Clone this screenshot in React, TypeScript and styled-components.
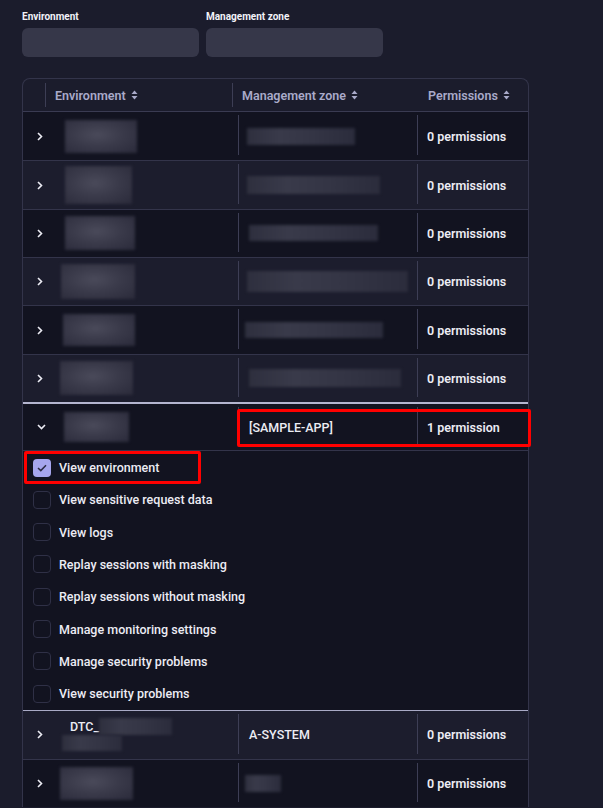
import React from "react";
import styled, { createGlobalStyle } from "styled-components";

const Global = createGlobalStyle`
  html, body { margin: 0; padding: 0; background: #1b1c2c; }
  body { font-family: Roboto, "Noto Sans", sans-serif; color: #ececf4; overflow: hidden; }
  * { box-sizing: border-box; }
`;

const Page = styled.div`
  width: 603px;
  height: 808px;
  padding: 0 22px;
  background: #1b1c2c;
  overflow: hidden;
`;

const Filters = styled.div`
  display: flex;
  gap: 7px;
  padding-top: 11px;
`;

const Field = styled.div`
  display: flex;
  flex-direction: column;
  gap: 5px;
`;

const FieldLabel = styled.div`
  font-size: 10px;
  font-weight: 700;
  color: #f2f2f8;
  height: 12px;
  line-height: 12px;
`;

const Input = styled.div`
  width: 177px;
  height: 29px;
  border-radius: 6px;
  background: #363749;
`;

const Table = styled.div`
  margin-top: 21px;
  width: 507px;
  border: 1px solid #33344a;
  border-bottom: none;
  border-radius: 8px 8px 0 0;
`;

const HeaderRow = styled.div`
  display: grid;
  grid-template-columns: 22px 187px 186px 1fr;
  height: 33px;
  border-bottom: 1px solid #3a3b52;
  align-items: center;
`;

const HeaderCell = styled.div<{ $divider?: boolean }>`
  position: relative;
  height: 100%;
  display: flex;
  align-items: center;
  gap: 5px;
  padding-left: 10px;
  font-size: 12.5px;
  font-weight: 600;
  color: #a9aac9;
  white-space: nowrap;
  &::before {
    content: "";
    display: ${(p) => (p.$divider ? "block" : "none")};
    position: absolute;
    left: 0;
    top: 4px;
    bottom: 4px;
    width: 1px;
    background: #3d3e55;
  }
`;

const Row = styled.div<{ $dark: boolean; $strongTop?: boolean; $noTop?: boolean }>`
  position: relative;
  display: grid;
  grid-template-columns: 34px 181px 179px 1fr;
  height: 48.35px;
  background: ${(p) => (p.$dark ? "#121320" : "#1c1d2d")};
  border-top: ${(p) =>
    p.$noTop ? "none" : p.$strongTop ? "2px solid #b4b5cf" : "1px solid #33344a"};
`;

const Cell = styled.div<{ $divider?: boolean }>`
  position: relative;
  display: flex;
  align-items: center;
  font-size: 12.5px;
  font-weight: 600;
  color: #ececf4;
  white-space: nowrap;
  &::before {
    content: "";
    display: ${(p) => (p.$divider ? "block" : "none")};
    position: absolute;
    left: 0;
    top: 3px;
    bottom: 5px;
    width: 1px;
    background: #3d3e55;
  }
`;

const ChevronCell = styled(Cell)`
  justify-content: flex-start;
  padding-left: 14px;
`;

const TextCell = styled(Cell)`
  padding-left: 10px;
`;

const ZoneCell = styled(Cell)`
  padding-left: 11px;
  font-weight: 500;
`;

const Blur = styled.div<{ $w: number; $h: number; $x: number }>`
  width: ${(p) => p.$w}px;
  height: ${(p) => p.$h}px;
  margin-left: ${(p) => p.$x}px;
  background: radial-gradient(ellipse at 45% 45%, #4a4a5a 0%, #3a3a4a 45%, #2a2a3a 100%);
  filter: blur(1.5px);
  flex-shrink: 0;
`;

const BarBlur = styled(Blur)`
  background: linear-gradient(90deg, #2e2f3e 0%, #393a4a 30%, #343545 60%, #2b2c3c 100%);
`;

const EnvStack = styled.div`
  display: flex;
  flex-direction: column;
  margin-left: 5px;
`;

const DtcLine = styled.div`
  display: flex;
  align-items: center;
  font-size: 12.5px;
  font-weight: 500;
`;

const DtcText = styled.span`
  margin-left: 8px;
`;

const PermList = styled.div`
  background: #121320;
  border-top: 1px solid #33344a;
  border-bottom: 1px solid #a9aac6;
  display: flex;
  flex-direction: column;
`;

const PermItem = styled.div`
  position: relative;
  height: 32.3px;
  display: flex;
  align-items: center;
  gap: 8px;
  padding-left: 10px;
  font-size: 12.5px;
  font-weight: 500;
  color: #ececf4;
`;

const Box = styled.div<{ $checked: boolean }>`
  width: 18px;
  height: 18px;
  border-radius: 4px;
  display: flex;
  align-items: center;
  justify-content: center;
  background: ${(p) => (p.$checked ? "#a6a6ee" : "transparent")};
  border: ${(p) => (p.$checked ? "none" : "1px solid #2f3046")};
`;

const Highlight = styled.div<{ $l: number; $t: number; $w: number; $h: number }>`
  position: absolute;
  left: ${(p) => p.$l}px;
  top: ${(p) => p.$t}px;
  width: ${(p) => p.$w}px;
  height: ${(p) => p.$h}px;
  border: 3px solid #ff0000;
  border-radius: 2px;
  pointer-events: none;
  z-index: 2;
`;

const SortIcon = () => (
  <svg width="7" height="10" viewBox="0 0 7 10">
    <path d="M3.5 0.5 L6.5 4 L0.5 4 Z" fill="#a9aac9" />
    <path d="M3.5 9.5 L6.5 6 L0.5 6 Z" fill="#a9aac9" />
  </svg>
);

const Chevron = ({ open }: { open?: boolean }) =>
  open ? (
    <svg width="9" height="6" viewBox="0 0 9 6">
      <path d="M1 1 L4.5 4.5 L8 1" stroke="#ececf4" strokeWidth="1.6" fill="none" />
    </svg>
  ) : (
    <svg width="6" height="9" viewBox="0 0 6 9">
      <path d="M1 1 L4.5 4.5 L1 8" stroke="#ececf4" strokeWidth="1.6" fill="none" />
    </svg>
  );

const Check = () => (
  <svg width="10" height="8" viewBox="0 0 10 8">
    <path d="M1 4 L3.8 6.6 L9 1.2" stroke="#2b2b45" strokeWidth="1.5" fill="none" />
  </svg>
);

type R = {
  env: { x: number; w: number; h: number };
  zone: { x: number; w: number; h: number };
};

const rows: R[] = [
  { env: { x: 8, w: 72, h: 33 }, zone: { x: 9, w: 108, h: 17 } },
  { env: { x: 8, w: 67, h: 38 }, zone: { x: 9, w: 133, h: 18 } },
  { env: { x: 8, w: 70, h: 34 }, zone: { x: 11, w: 129, h: 16 } },
  { env: { x: 4, w: 74, h: 35 }, zone: { x: 9, w: 161, h: 21 } },
  { env: { x: 6, w: 72, h: 32 }, zone: { x: 7, w: 138, h: 16 } },
  { env: { x: 3, w: 73, h: 34 }, zone: { x: 11, w: 152, h: 18 } },
];

const perms = [
  "View environment",
  "View sensitive request data",
  "View logs",
  "Replay sessions with masking",
  "Replay sessions without masking",
  "Manage monitoring settings",
  "Manage security problems",
  "View security problems",
];

export default function App() {
  return (
    <Page>
      <Global />
      <Filters>
        <Field>
          <FieldLabel>Environment</FieldLabel>
          <Input />
        </Field>
        <Field>
          <FieldLabel>Management zone</FieldLabel>
          <Input />
        </Field>
      </Filters>
      <Table>
        <HeaderRow>
          <HeaderCell />
          <HeaderCell $divider>
            Environment <SortIcon />
          </HeaderCell>
          <HeaderCell $divider>
            Management zone <SortIcon />
          </HeaderCell>
          <HeaderCell>
            Permissions <SortIcon />
          </HeaderCell>
        </HeaderRow>
        {rows.map((r, i) => (
          <Row key={i} $dark={i % 2 === 0} $noTop={i === 0}>
            <ChevronCell>
              <Chevron />
            </ChevronCell>
            <Cell>
              <Blur $x={r.env.x} $w={r.env.w} $h={r.env.h} />
            </Cell>
            <Cell $divider>
              <BarBlur $x={r.zone.x} $w={r.zone.w} $h={r.zone.h} />
            </Cell>
            <TextCell $divider>0 permissions</TextCell>
          </Row>
        ))}
        <Row $dark $strongTop>
          <ChevronCell>
            <Chevron open />
          </ChevronCell>
          <Cell>
            <Blur $x={7} $w={65} $h={30} />
          </Cell>
          <ZoneCell $divider>[SAMPLE-APP]</ZoneCell>
          <TextCell $divider>1 permission</TextCell>
          <Highlight $l={214} $t={5} $w={294} $h={38} />
        </Row>
        <PermList>
          {perms.map((p, i) => (
            <PermItem key={p}>
              <Box $checked={i === 0}>{i === 0 && <Check />}</Box>
              {p}
              {i === 0 && <Highlight $l={1} $t={0} $w={177} $h={33} />}
            </PermItem>
          ))}
        </PermList>
        <Row $dark={false} $noTop>
          <ChevronCell>
            <Chevron />
          </ChevronCell>
          <Cell>
            <EnvStack>
              <DtcLine>
                <DtcText>DTC_</DtcText>
                <BarBlur $x={0} $w={73} $h={17} />
              </DtcLine>
              <BarBlur $x={0} $w={60} $h={16} />
            </EnvStack>
          </Cell>
          <ZoneCell $divider>A-SYSTEM</ZoneCell>
          <TextCell $divider>0 permissions</TextCell>
        </Row>
        <Row $dark>
          <ChevronCell>
            <Chevron />
          </ChevronCell>
          <Cell>
            <Blur $x={3} $w={73} $h={33} />
          </Cell>
          <Cell $divider>
            <BarBlur $x={7} $w={36} $h={17} />
          </Cell>
          <TextCell $divider>0 permissions</TextCell>
        </Row>
      </Table>
    </Page>
  );
}
